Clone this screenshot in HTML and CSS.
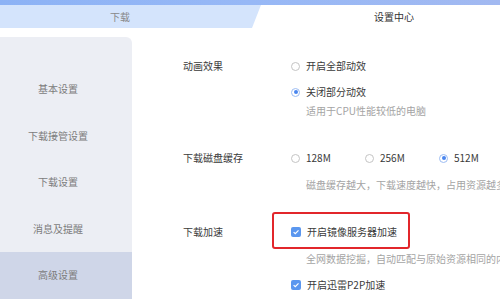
FILE: index.html
```html
<!DOCTYPE html>
<html>
<head>
  <meta charset="utf-8">
  <link rel="stylesheet" href="styles.css">
</head>
<body>

<!-- 顶部标签栏 -->
<div class="topband"></div>
<div class="tabs">
  <div class="tab tab-left">下载</div>
  <div class="tab tab-active">设置中心</div>
</div>

<div class="main">
  <!-- 左侧菜单 -->
  <div class="sidebar">
    <div class="menu-item">基本设置</div>
    <div class="menu-item">下载接管设置</div>
    <div class="menu-item">下载设置</div>
    <div class="menu-item">消息及提醒</div>
    <div class="menu-item active">高级设置</div>
  </div>

  <!-- 设置内容 -->
  <div class="content">
    <div class="row">
      <div class="label">动画效果</div>
      <div class="options">
        <div class="opt"><span class="radio"></span>开启全部动效</div>
        <div class="opt gap"><span class="radio checked"></span>关闭部分动效</div>
        <div class="hint hint-tight">适用于CPU性能较低的电脑</div>
      </div>
    </div>

    <div class="row">
      <div class="label">下载磁盘缓存</div>
      <div class="options">
        <div class="opt-line">
          <div class="opt inline"><span class="radio"></span>128M</div>
          <div class="opt inline"><span class="radio"></span>256M</div>
          <div class="opt inline"><span class="radio checked"></span>512M</div>
        </div>
        <div class="hint">磁盘缓存越大，下载速度越快，占用资源越多</div>
      </div>
    </div>

    <div class="row">
      <div class="label">下载加速</div>
      <div class="options">
        <div class="opt marked">
          <span class="check">
            <svg width="10" height="10" viewBox="0 0 10 10"><path d="M2.6 5.1 L4.3 6.7 L7.5 3.4" fill="none" stroke="#fff" stroke-width="1.2"/></svg>
          </span>开启镜像服务器加速
          <span class="redbox"></span>
        </div>
        <div class="hint">全网数据挖掘，自动匹配与原始资源相同的内容</div>
        <div class="opt gap">
          <span class="check">
            <svg width="10" height="10" viewBox="0 0 10 10"><path d="M2.6 5.1 L4.3 6.7 L7.5 3.4" fill="none" stroke="#fff" stroke-width="1.2"/></svg>
          </span>开启迅雷P2P加速
        </div>
      </div>
    </div>
  </div>
</div>

</body>
</html>
```

FILE: styles.css
```css
/* 整体 */
html, body {
  margin: 0;
  padding: 0;
  width: 500px;
  height: 299px;
  overflow: hidden;
  background: #fff;
  font-family: "Noto Sans CJK SC", "Noto Sans", sans-serif;
  font-size: 10px;
  color: #3a3a3a;
}
.topband {
  height: 5px;
  background: linear-gradient(to right, #8cb2f5, #97b8f6 50%, #a2b9f1);
}
.tabs {
  display: flex;
  height: 23px;
  background: #d4e4fc;
}
.tab {
  line-height: 23px;
  text-align: center;
}
.tab-left {
  width: 240px;
  padding-right: 12px;
  color: #888;
}
.tab-active {
  flex: 1;
  padding-left: 36px;
  background: #fff;
  color: #333;
  clip-path: polygon(9px 0, 100% 0, 100% 100%, 0 100%);
}

/* 主体 */
.main {
  display: flex;
  height: 271px;
}
.sidebar {
  width: 132px;
  margin-top: 9px;
  padding-top: 29px;
  background: #eceef4;
  border-top-right-radius: 6px;
  flex-shrink: 0;
}
.menu-item {
  height: 46.6px;
  line-height: 46.6px;
  text-align: center;
  padding-right: 16px;
  color: #7c7c7c;
}
.menu-item.active {
  background: #cfd6e8;
}

.content {
  flex: 1;
  padding-left: 51px;
  white-space: nowrap;
}
.row {
  display: flex;
  margin-top: 29px;
}
.label {
  width: 108px;
  line-height: 18px;
}
.options {
  flex: 1;
}
.opt {
  height: 18px;
  line-height: 18px;
  display: flex;
  align-items: center;
  position: relative;
}
.opt.gap {
  margin-top: 8px;
}
.opt-line {
  display: flex;
}
.opt.inline {
  width: 74px;
}
.radio {
  width: 7px;
  height: 7px;
  border: 1px solid #c4c4c4;
  border-radius: 50%;
  margin-right: 6px;
  background: #fff;
  position: relative;
}
.radio.checked {
  border-color: #9dbdf3;
}
.radio.checked::after {
  content: "";
  position: absolute;
  left: 1.5px;
  top: 1.5px;
  width: 4px;
  height: 4px;
  border-radius: 50%;
  background: #4a86ef;
}
.check {
  width: 10px;
  height: 10px;
  border-radius: 2px;
  background: #5b97ef;
  margin-right: 6px;
  display: flex;
}
.hint {
  margin-top: 9px;
  padding-left: 15px;
  line-height: 18px;
  color: #a4a4a4;
}
.hint-tight {
  margin-top: 1px;
}
.redbox {
  position: absolute;
  left: -19px;
  top: -11px;
  width: 134px;
  height: 33px;
  border: 2px solid #e2262b;
  border-radius: 3px;
}
```
